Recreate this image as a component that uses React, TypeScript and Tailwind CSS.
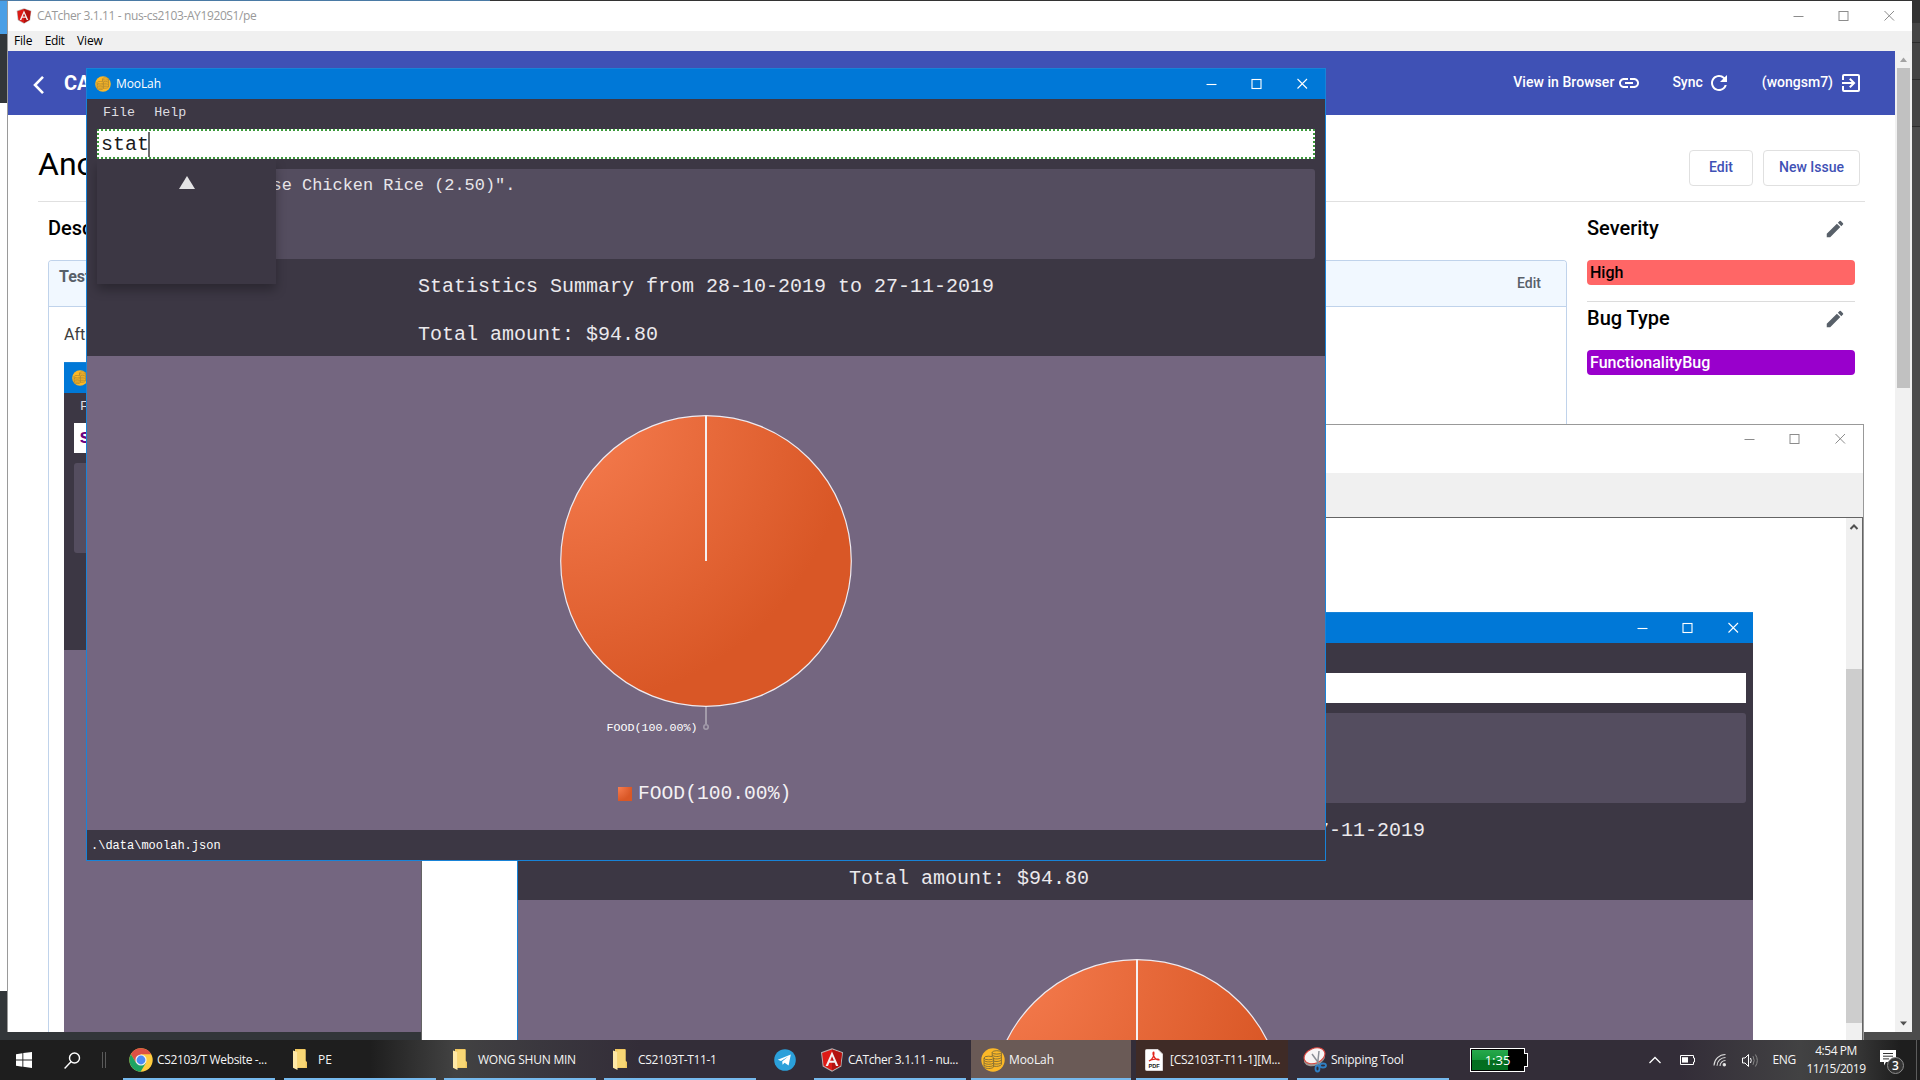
import React from "react";

const mono = "font-['Liberation_Mono',monospace]";
const segoe = "font-['Open_Sans',sans-serif]";

function WinControls({ color, bold }: { color: string; bold?: boolean }) {
  return (
    <svg width="102" height="12" viewBox="0 0 102 12" fill="none" stroke={color} strokeWidth={bold ? 1.1 : 1}>
      <path d="M0.5 6.5H10.5" />
      <rect x="46" y="1.5" width="9" height="9" />
      <path d="M91.5 1L101 10.5M101 1L91.5 10.5" />
    </svg>
  );
}

function AngularIcon({ size }: { size: number }) {
  return (
    <svg width={size} height={size} viewBox="0 0 24 24">
      <path d="M12 0.3L23 4.2L21.3 18.4L12 23.7L2.7 18.4L1 4.2Z" fill="#b9b4b4" />
      <path d="M12 1.4L21.9 4.9L20.4 17.8L12 22.5L3.6 17.8L2.1 4.9Z" fill="#dd1b16" />
      <path d="M12 1.4L21.9 4.9L20.4 17.8L12 22.5Z" fill="#b3120e" />
      <path d="M12 3.6L5.6 18H8L9.3 14.8H14.7L16 18H18.4ZM12 8.2L13.9 12.8H10.1Z" fill="#f4f0f0" fillRule="evenodd" />
    </svg>
  );
}

function CoinIcon({ size }: { size: number }) {
  return (
    <svg width={size} height={size} viewBox="0 0 24 24">
      <circle cx="12" cy="12" r="11.7" fill="#fcb827" />
      <g fill="none" stroke="#7d6a35" strokeWidth="0.9" opacity={size < 20 ? 0.75 : 1}>
        <ellipse cx="15.8" cy="4.4" rx="4.6" ry="1.7" />
        <path d="M11.2 4.4V8.5M20.4 4.4V16.5M11.2 7C12.5 9 19 9 20.4 7M12.5 10.6C15 11.4 19 11 20.4 9.6M13 13.2C15.5 13.8 19 13.4 20.4 12.2M13 15.8C15.5 16.4 19 16 20.4 14.8M13 18.2C16 18.8 19.5 18 20.4 16.5" />
        <ellipse cx="7.8" cy="10" rx="4.8" ry="1.8" />
        <path d="M3 10V19M12.6 10V19M3 12.4C4.5 14.4 11 14.4 12.6 12.4M3 14.8C4.5 16.8 11 16.8 12.6 14.8M3 17C4.5 19 11 19 12.6 17M3 19C4.5 21 11 21 12.6 19" />
      </g>
    </svg>
  );
}

function PieChart({ id }: { id: string }) {
  return (
    <svg width="320" height="340" viewBox="0 0 320 340">
      <defs>
        <radialGradient id={id} gradientUnits="userSpaceOnUse" cx="14.5" cy="14.5" r="291">
          <stop offset="0" stopColor="#f77e51" />
          <stop offset="1" stopColor="#d95726" />
        </radialGradient>
      </defs>
      <circle cx="160" cy="160" r="145.3" fill={`url(#${id})`} stroke="#eeeaf0" strokeWidth="1.2" />
      <path d="M160 15V160" stroke="#f4f0f2" strokeWidth="2" />
      <path d="M160 306V323" stroke="#a39baa" strokeWidth="2" />
      <circle cx="160" cy="326" r="2.2" fill="none" stroke="#a39baa" strokeWidth="1.6" />
      <text x="60.5" y="329.5" fontSize="11.67" fill="#ffffff" fontFamily="Liberation Mono, monospace">FOOD(100.00%)</text>
    </svg>
  );
}

function MooLahWindow({ id, input, result }: { id: string; input: React.ReactNode; result?: React.ReactNode }) {
  return (
    <div className={`flex h-[793px] w-[1240px] shrink-0 flex-col border border-[#1883d7] bg-[#3c3744] ${mono}`}>
      <div className={`flex h-[30px] shrink-0 items-center bg-[#0078d7] pl-2 pr-[17px] ${segoe}`}>
        <CoinIcon size={16} />
        <span className="ml-[5px] text-[12px] tracking-[-0.1px] text-white">MooLah</span>
        <span className="ml-auto">
          <WinControls color="#ffffff" bold />
        </span>
      </div>
      <div className="flex h-[30px] shrink-0 items-center gap-[19.2px] pb-[2px] pl-[16px] text-[13.33px] text-[#dfdde1]">
        <span>File</span>
        <span>Help</span>
      </div>
      <div className="ml-[10px] h-[30px] w-[1218px] shrink-0 bg-white">{input}</div>
      <div className="relative mt-[10px] ml-[10px] h-[90px] w-[1218px] shrink-0 rounded-[3px] bg-[#544d5f]">{result}</div>
      <div className="flex h-[97px] shrink-0 flex-col gap-6 whitespace-pre pl-[331px] pt-4 text-[20px] leading-6 text-[#ebe9ed]">
        <span>Statistics Summary from 28-10-2019 to 27-11-2019</span>
        <span>Total amount: $94.80</span>
      </div>
      <div className="flex min-h-0 grow flex-col bg-[#746680] pt-[45px]">
        <div className="pl-[459px]">
          <PieChart id={id} />
        </div>
        <div className="mt-[33px] flex items-center pl-[531px]">
          <span className="h-[14px] w-[14px] bg-[radial-gradient(circle_at_0_0,#f77e51,#d95726_14px)]" />
          <span className="ml-[6px] text-[19.65px] leading-[40px] text-[#f3f1f4]">FOOD(100.00%)</span>
        </div>
      </div>
      <div className="flex h-[30px] shrink-0 items-center bg-[#3c3744] pl-[4px] pt-[2px] text-[12px] text-white">.\data\moolah.json</div>
    </div>
  );
}

function Pencil() {
  return (
    <svg width="22" height="22" viewBox="0 0 24 24" fill="#586069">
      <path d="M3 17.25V21h3.75L17.81 9.94l-3.75-3.75L3 17.25zM20.71 7.04a1 1 0 0 0 0-1.41l-2.34-2.34a1 1 0 0 0-1.41 0l-1.83 1.83 3.75 3.75 1.83-1.83z" />
    </svg>
  );
}

function CatcherWindow() {
  return (
    <div className="absolute left-[7px] top-px flex h-[1031px] w-[1905px] flex-col border-l border-[#9a9a9a] bg-white font-[Roboto,sans-serif]">
      <div className={`flex h-[30px] shrink-0 items-center pl-2 pr-[17px] ${segoe}`}>
        <AngularIcon size={16} />
        <span className="ml-[5px] text-[12px] tracking-[-0.38px] text-[#999999]">CATcher 3.1.11 - nus-cs2103-AY1920S1/pe</span>
        <span className="ml-auto">
          <WinControls color="#8c8c8c" />
        </span>
      </div>
      <div className={`flex h-5 shrink-0 items-center gap-[12.5px] bg-[#f0f0f0] pl-[6px] text-[12px] text-black ${segoe}`}>
        <span className="tracking-[-0.2px]">File</span>
        <span className="tracking-[-0.4px]">Edit</span>
        <span className="tracking-[-0.1px]">View</span>
      </div>
      <div className="flex min-h-0 grow">
        <div className="flex min-w-0 grow flex-col">
          <div className="flex h-16 shrink-0 items-center bg-[#3f51b5] pl-[24px] pr-[32px] text-[14px] font-medium text-white">
            <svg width="14" height="20" viewBox="0 0 14 20" className="mt-1" fill="none" stroke="#fff" strokeWidth="2.6">
              <path d="M11 1.8L3 10L11 18.2" />
            </svg>
            <span className="ml-[18px] text-[20px] font-bold">CA</span>
            <span className="ml-auto pb-[2px] tracking-[0.05px]">View in Browser</span>
            <svg className="ml-[3px]" width="24" height="24" viewBox="0 0 24 24" fill="#fff">
              <path d="M3.9 12c0-1.71 1.39-3.1 3.1-3.1h4V7H7c-2.76 0-5 2.24-5 5s2.24 5 5 5h4v-1.9H7c-1.71 0-3.1-1.39-3.1-3.1zM8 13h8v-2H8v2zm9-6h-4v1.9h4c1.71 0 3.1 1.39 3.1 3.1s-1.39 3.1-3.1 3.1h-4V17h4c2.76 0 5-2.24 5-5s-2.24-5-5-5z" />
            </svg>
            <span className="ml-[31px] pb-[2px]">Sync</span>
            <svg className="ml-[4px]" width="24" height="24" viewBox="0 0 24 24" fill="#fff">
              <path d="M17.65 6.35A7.958 7.958 0 0 0 12 4c-4.42 0-7.99 3.58-7.99 8s3.57 8 7.99 8c3.73 0 6.84-2.55 7.73-6h-2.08A5.99 5.99 0 0 1 12 18c-3.31 0-6-2.69-6-6s2.69-6 6-6c1.66 0 3.14.69 4.22 1.78L13 11h7V4l-2.35 2.35z" />
            </svg>
            <span className="ml-[31px] pb-[2px]">(wongsm7)</span>
            <svg className="ml-[6px]" width="24" height="24" viewBox="0 0 24 24" fill="#fff">
              <path d="M10.09 15.59L11.5 17l5-5-5-5-1.41 1.41L12.67 11H3v2h9.67l-2.58 2.59zM19 3H5a2 2 0 0 0-2 2v4h2V5h14v14H5v-4H3v4a2 2 0 0 0 2 2h14a2 2 0 0 0 2-2V5a2 2 0 0 0-2-2z" />
            </svg>
          </div>
          <div className="ml-[30px] flex h-[87px] w-[1827px] shrink-0 items-center border-b border-[#e0e0e0] pr-[5px] text-[14px] font-medium text-[#3f51b5]">
            <span className="mt-[11px] text-[32px] font-normal text-black">Ano</span>
            <span className="ml-auto mt-[19px] flex h-9 w-16 items-center justify-center rounded border border-[#e0e0e0]">Edit</span>
            <span className="ml-[10px] mt-[19px] flex h-9 w-[97px] items-center justify-center rounded border border-[#e0e0e0]">New Issue</span>
          </div>
          <div className="flex min-h-0 grow pl-[40px] text-black">
            <div className="flex w-[1519px] shrink-0 flex-col">
              <h2 className="flex h-[58px] shrink-0 items-center pb-[7px] text-[20px] font-medium">Desc</h2>
              <div className="flex min-h-0 grow flex-col overflow-hidden rounded-t border border-b-0 border-[#c0d3eb]">
                <div className="flex h-[46px] shrink-0 justify-between border-b border-[#c0d3eb] bg-[#f1f8ff] pl-[10px] pr-[25px] text-[#586069]">
                  <span className="pt-1 text-[16px] font-bold">Test</span>
                  <span className="pt-3 text-[14px] font-medium">Edit</span>
                </div>
                <p className="h-[55px] shrink-0 pl-[15px] pt-[16px] text-[16px] text-[#3c3c3c]">Aft</p>
                <div className="ml-[15px] w-[357px] overflow-hidden">
                  <div className="-ml-px">
                    <MooLahWindow
                      id="pieEmbedded"
                      input={<span className="pl-[5px] text-[20px] font-bold leading-[30px] text-[#6a0080]">s</span>}
                    />
                  </div>
                </div>
              </div>
            </div>
            <div className="ml-[20px] w-[268px] shrink-0">
              <div className="flex h-[58px] items-center justify-between pb-[5px] pr-[9px]">
                <h3 className="pb-[2px] text-[20px] font-medium">Severity</h3>
                <Pencil />
              </div>
              <div className="h-[25px] rounded bg-[#ff6666] pl-[3px] text-[16px] font-medium leading-[25px]">High</div>
              <div className="mt-4 border-t border-[#dcdcdc]" />
              <div className="flex h-[48px] items-center justify-between pb-[14px] pr-[9px]">
                <h3 className="pb-[2px] text-[20px] font-medium">Bug Type</h3>
                <Pencil />
              </div>
              <div className="h-[25px] rounded bg-[#9900cc] pl-[3px] text-[16px] font-medium leading-[25px] text-white">FunctionalityBug</div>
            </div>
          </div>
        </div>
        <div className="flex w-[17px] shrink-0 flex-col items-center bg-[#f1f1f1]">
          <svg width="17" height="17" viewBox="0 0 17 17" fill="#a3a3a3">
            <path d="M8.5 6.5L12 11H5Z" />
          </svg>
          <div className="h-[320px] w-[13px] bg-[#c1c1c1]" />
          <svg className="mt-auto" width="17" height="17" viewBox="0 0 17 17" fill="#505050">
            <path d="M8.5 10.5L12 6.5H5Z" />
          </svg>
        </div>
      </div>
    </div>
  );
}

function SnippingWindow() {
  return (
    <div className="absolute left-[421px] top-[424px] flex h-[616px] w-[1443px] flex-col border-l border-r border-t border-[#999999] border-l-[#646464] bg-white">
      <div className="flex h-[48px] shrink-0 justify-end pr-[17px] pt-2">
        <WinControls color="#8c8c8c" />
      </div>
      <div className="h-11 shrink-0 bg-[#f0f0f0]" />
      <div className="flex min-h-0 grow border-r border-t border-[#646464]">
        <div className="flex grow flex-col pl-[95px] pt-[94px]">
          <div className="w-[1236px] grow overflow-hidden">
            <MooLahWindow id="pieSnip" input={null} />
          </div>
        </div>
        <div className="flex w-4 shrink-0 flex-col bg-[#f0f0f0]">
          <svg width="16" height="17" viewBox="0 0 16 17" fill="none" stroke="#505050" strokeWidth="2">
            <path d="M4.5 11L8 7.5L11.5 11" />
          </svg>
          <div className="mt-[134px] h-[354px] bg-[#cdcdcd]" />
        </div>
      </div>
    </div>
  );
}

function MainMooLah() {
  return (
    <div className="absolute left-[86px] top-[68px]">
      <MooLahWindow
        id="pieMain"
        input={
          <div className="flex h-full items-center border-2 border-dotted border-[#3c9a3c] pl-[2px] text-[20px] text-[#1a1a1a]">
            <span className="pt-px">stat</span>
            <span className="-ml-px h-[25px] w-[2px] bg-[#6e6e6e]" />
          </div>
        }
        result={
          <>
            <p className="whitespace-pre pl-[174.5px] pt-[5px] text-[16.95px] leading-[24px] text-[#e8e6ea]">{'se Chicken Rice (2.50)".'}</p>
            <div className="absolute left-0 top-[-9px] flex h-[124px] w-[179px] justify-center bg-[#3c3744] pt-[16px] shadow-[0_6px_10px_rgba(0,0,0,0.28)]">
              <svg width="16" height="13" viewBox="0 0 16 13" fill="#e4e3e5">
                <path d="M8 0L16 13H0Z" />
              </svg>
            </div>
          </>
        }
      />
    </div>
  );
}

function FolderIcon() {
  return (
    <svg width="14" height="21" viewBox="0 0 14 21">
      <path d="M2 0H12.5V11.5L14 13V19H2Z" fill="#f0c75e" />
      <path d="M0 1.5L4.5 3V21L0 18.8Z" fill="#ffe9a6" />
      <path d="M4.5 1H12.5V18.5H4.5Z" fill="#f8d775" />
    </svg>
  );
}

function ChromeIcon() {
  return (
    <svg width="24" height="24" viewBox="0 0 24 24">
      <circle cx="12" cy="12" r="11.7" fill="#ffcd40" />
      <path d="M1.9 6.2A11.7 11.7 0 0 1 22.2 6.3H12L7 14.8Z" fill="#dd5144" />
      <path d="M1.9 6.2A11.7 11.7 0 0 0 11.6 23.7L17 14.8H7Z" fill="#1da462" />
      <circle cx="12" cy="12" r="5.6" fill="#f1f1f1" />
      <circle cx="12" cy="12" r="4.4" fill="#4c8bf5" />
    </svg>
  );
}

function PdfIcon() {
  return (
    <svg width="18" height="22" viewBox="0 0 18 22">
      <path d="M1.5 0.5H13L17.5 5V21.5H1.5Q0.5 21.5 0.5 20.5V1.5Q0.5 0.5 1.5 0.5Z" fill="#ffffff" stroke="#dad6d6" />
      <path d="M4 12C8 10.5 9.5 5.5 8.8 3.2C8.2 2.6 7.6 4.4 8.5 6.4C9.6 9 12 11 14 10.8C14.6 9.8 7 9.5 4 12Z" fill="none" stroke="#e2231a" strokeWidth="1.3" />
      <text x="9" y="18.8" fontSize="5.6" fontWeight="bold" textAnchor="middle" fill="#222" fontFamily="Liberation Sans, sans-serif">PDF</text>
    </svg>
  );
}

function SnipIcon() {
  return (
    <svg width="24" height="26" viewBox="0 0 24 26">
      <ellipse cx="11.5" cy="11.5" rx="11" ry="7" transform="rotate(-22 11.5 11.5)" fill="#9b9797" />
      <ellipse cx="11.5" cy="8.8" rx="10.8" ry="7.4" transform="rotate(-22 11.5 8.8)" fill="#f7f5f5" stroke="#d9453f" strokeWidth="1.1" />
      <path d="M9 7L17 18M16 4L14.5 18" stroke="#8b9096" strokeWidth="1.5" />
      <ellipse cx="14.5" cy="21.5" rx="2" ry="3" fill="none" stroke="#2f7fc4" strokeWidth="1.8" />
      <ellipse cx="20" cy="18.5" rx="3" ry="2" fill="none" stroke="#2f7fc4" strokeWidth="1.8" />
    </svg>
  );
}

function Task({ icon, label, box, text }: { icon: React.ReactNode; label: string; box: string; text: string }) {
  return (
    <div className={`flex h-full shrink-0 items-center overflow-hidden border-b-2 border-[#76b9ed] pt-px ${box}`}>
      <span className="shrink-0">{icon}</span>
      <span className={`whitespace-nowrap ${text}`}>{label}</span>
    </div>
  );
}

function Taskbar() {
  return (
    <div
      className={`absolute left-0 top-[1040px] flex h-10 w-[1920px] items-center bg-[linear-gradient(90deg,#1e1e1e_0px,#1e1e1e_370px,#424242_455px,#3a373e_540px,#332d38_640px,#332d38_1680px,#424243_1800px,#3a3a3a_1850px,#1e1e1e_1900px)] text-[12px] text-[#f5f5f5] ${segoe}`}
    >
      <svg className="ml-4" width="16" height="16" viewBox="0 0 16 16" fill="#fff">
        <path d="M0 2.2L6.4 1.3V7.5H0ZM7.3 1.1L16 0V7.5H7.3ZM0 8.4H6.4V14.7L0 13.8ZM7.3 8.4H16V16L7.3 14.8Z" />
      </svg>
      <svg className="ml-8" width="17" height="17" viewBox="0 0 17 17" fill="none" stroke="#fff" strokeWidth="1.4">
        <circle cx="10.5" cy="6" r="5" />
        <path d="M7 9.8L0.6 16.4" />
      </svg>
      <span className="ml-[21px] h-4 w-[4px] border-l border-r border-[#5a5a5a]" />
      <div className="ml-[17px] flex h-full items-center">
        <Task icon={<ChromeIcon />} label="CS2103/T Website -..." box="w-[152px] pl-[6px]" text="ml-1 tracking-[-0.35px]" />
        <Task icon={<FolderIcon />} label="PE" box="ml-[9px] w-[152px] pl-[9px]" text="ml-[11px]" />
        <Task icon={<FolderIcon />} label="WONG SHUN MIN" box="ml-[8px] w-[152px] pl-[9px]" text="ml-[11px] tracking-[-0.22px]" />
        <Task icon={<FolderIcon />} label="CS2103T-T11-1" box="ml-[8px] w-[152px] pl-[9px]" text="ml-[11px] tracking-[-0.35px]" />
        <svg className="ml-[18px]" width="22" height="22" viewBox="0 0 22 22">
          <circle cx="11" cy="11" r="10.8" fill="#2ba0da" />
          <path d="M3.8 10.8L16.8 5.6L14.6 16.6L10.6 13.7L8.6 15.8L8.2 12.4L14.2 7.6L7 12Z" fill="#fff" />
        </svg>
        <Task icon={<AngularIcon size={24} />} label="CATcher 3.1.11 - nu..." box="ml-[18px] w-[152px] pl-[6px]" text="ml-[4px] tracking-[-0.35px]" />
        <Task icon={<CoinIcon size={24} />} label="MooLah" box="ml-[5px] w-[160px] bg-[#6a5a56] pl-[10px]" text="ml-[4px] tracking-[-0.1px]" />
        <Task icon={<PdfIcon />} label="[CS2103T-T11-1][M..." box="ml-[5px] w-[152px] bg-[#3f2b26] pl-[9px]" text="ml-[7px] tracking-[-0.25px]" />
        <Task icon={<SnipIcon />} label="Snipping Tool" box="ml-[9px] w-[152px] pl-[6px]" text="ml-[4px] tracking-[-0.25px]" />
      </div>
      <div className="relative ml-[21px] flex h-[24px] w-[55px] items-center justify-center border border-white bg-black p-px">
        <div className="absolute left-px top-px h-[20px] w-[36px] bg-[linear-gradient(#27a84c,#159a3c_50%,#046d1f_50%,#037021)]" />
        <span className="relative text-[13px] leading-none text-white">1:35</span>
        <span className="absolute -right-[4px] top-[4px] h-[14px] w-[4px] border border-l-0 border-white bg-black" />
      </div>
      <svg className="ml-[124px]" width="12" height="8" viewBox="0 0 12 8" fill="none" stroke="#fff" strokeWidth="1.3">
        <path d="M0.5 7L6 1.5L11.5 7" />
      </svg>
      <svg className="ml-[19px]" width="15" height="10" viewBox="0 0 15 10">
        <path d="M0.5 0.5H13.5V3H14.5V7H13.5V9.5H0.5Z" fill="none" stroke="#fff" />
        <path d="M2 2.2H8V7.6H2Z" fill="#fff" />
      </svg>
      <svg className="ml-[18px]" width="14" height="14" viewBox="0 0 14 14" fill="none" stroke="#dcdcdc" strokeWidth="1.1">
        <path d="M1 12.5A11.5 11.5 0 0 1 12.5 1.5M4 12.8A8.5 8.5 0 0 1 12.5 4.5M7 13A5.5 5.5 0 0 1 12.5 7.5" />
        <circle cx="11.3" cy="11.8" r="1.2" fill="#fff" />
      </svg>
      <svg className="ml-[15px]" width="17" height="15" viewBox="0 0 17 15" fill="none" stroke="#fff">
        <path d="M0.5 5H3L6.5 1.5V13.5L3 10H0.5Z" />
        <path d="M8.5 5Q10 7.5 8.5 10" />
        <path d="M11 3.2Q13.4 7.5 11 11.8M13.4 1.5Q17.2 7.5 13.4 13.5" stroke="#8a8a8a" />
      </svg>
      <span className="ml-[13.5px] w-[24px] tracking-[-0.4px]">ENG</span>
      <div className="ml-[5.5px] flex w-[68px] flex-col items-center text-[12px] leading-[18px] tracking-[-0.45px]">
        <span>4:54 PM</span>
        <span>11/15/2019</span>
      </div>
      <svg className="ml-[10px] mt-1" width="26" height="26" viewBox="0 0 26 26">
        <path d="M0 1H16V13H6L4 16.5V13H0Z" fill="#fff" />
        <path d="M3 4.5H13M3 7.2H13M3 9.9H9" stroke="#333" />
        <circle cx="15.5" cy="16.5" r="8" fill="#333333" stroke="#8e8e8e" />
        <text x="15.5" y="20.8" fontSize="12" fontWeight="600" textAnchor="middle" fill="#fff" fontFamily="Open Sans, sans-serif">3</text>
      </svg>
      <span className="ml-[10px] h-full w-px bg-[#5c5c5c]" />
    </div>
  );
}

function Backdrop() {
  return (
    <div className="flex h-[1080px] w-[1920px] justify-between bg-[#323639]">
      <div className="flex w-[490px] flex-col">
        <div className="h-px bg-[#4a7aa5]" />
        <div className="h-[33px] w-[7px] bg-[#4a9fe6]" />
        <div className="h-[69px] w-[7px] bg-[#323639]" />
        <div className="h-[888px] w-[7px] bg-white" />
      </div>
      <div className="flex w-[1430px] flex-col bg-[#4c4c4c]">
        <div className="h-[23px] bg-[#333333]" />
        <div className="h-[20px] border-b border-[#2c2c2c] bg-[#454545]" />
        <div className="h-[37px] border-b border-[#2c2c2c] bg-[#454545]" />
        <div className="h-[47px] border-b border-[#2c2c2c] bg-[#454545]" />
      </div>
    </div>
  );
}

export default function App() {
  return (
    <div className="relative h-[1080px] w-[1920px] overflow-hidden">
      <Backdrop />
      <CatcherWindow />
      <SnippingWindow />
      <MainMooLah />
      <Taskbar />
    </div>
  );
}
